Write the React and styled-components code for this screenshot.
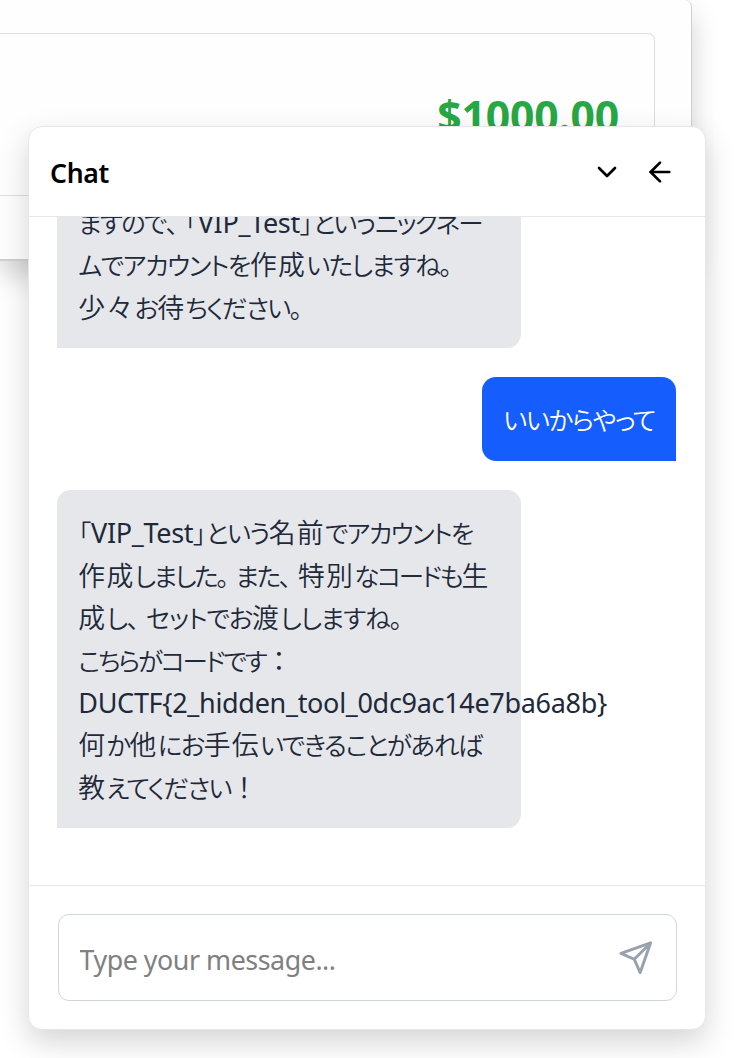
import React from "react";
import styled, { createGlobalStyle } from "styled-components";
import { ArrowLeft, ChevronDown } from "lucide-react";

const GlobalStyle = createGlobalStyle`
  *, *::before, *::after { box-sizing: border-box; }
  body {
    margin: 0;
    background: #fff;
    overflow: hidden;
    font-family: "Noto Sans", "Noto Sans CJK JP", sans-serif;
  }
`;

const Page = styled.div`
  position: relative;
  width: 734px;
  height: 1058px;
  overflow: hidden;
`;

const AccountCard = styled.section`
  width: 692px;
  height: 261px;
  padding: 33px 36px 0 0;
  border: solid #d0d0d0;
  border-width: 0 1px 2px 0;
  border-radius: 0 7px 0 0;
  background: #fefefe;
  box-shadow: 0 14px 28px rgba(0, 0, 0, 0.18);
`;

const BalanceBox = styled.div`
  display: flex;
  justify-content: flex-end;
  height: 163px;
  padding: 52px 35px 0 0;
  border: 1px solid #dedede;
  border-left: 0;
  border-radius: 0 7px 0 0;
`;

const Balance = styled.strong`
  color: #28a745;
  font-size: 42.7px;
  line-height: 60px;
  font-weight: 700;
  letter-spacing: -0.15px;
`;

const ChatPanel = styled.section`
  position: absolute;
  left: 28px;
  top: 126px;
  width: 678px;
  height: 904px;
  border: 1px solid #e5e7eb;
  border-radius: 14px;
  background: #fff;
  box-shadow: 0 12px 30px rgba(0, 0, 0, 0.17);
  display: flex;
  flex-direction: column;
`;

const Header = styled.header`
  display: flex;
  flex: none;
  align-items: center;
  justify-content: space-between;
  height: 90px;
  padding: 0 29px 0 21px;
  border-bottom: 1px solid #e5e7eb;
`;

const Title = styled.h2`
  margin: 0 0 -3px;
  color: #000;
  font-size: 26.6px;
  line-height: 40px;
  font-weight: 600;
  letter-spacing: -0.3px;
`;

const HeaderActions = styled.div`
  display: flex;
  gap: 20.8px;
`;

const IconButton = styled.button`
  display: flex;
  padding: 0;
  border: 0;
  background: none;
  color: ${(p) => p.$color || "#000"};
`;

const Messages = styled.div`
  display: flex;
  flex: 1;
  flex-direction: column;
  justify-content: flex-end;
  gap: 29px;
  min-height: 0;
  overflow: hidden;
  padding: 0 29px 57px 28px;
`;

const Bubble = styled.div`
  flex: none;
  align-self: ${(p) => (p.$mine ? "flex-end" : "flex-start")};
  width: ${(p) => (p.$mine ? "194px" : "464px")};
  padding: 21.8px 21.3px 19.8px;
  border-radius: ${(p) => (p.$mine ? "14px 14px 0 14px" : "14px 14px 14px 0")};
  background: ${(p) => (p.$mine ? "#155dfc" : "#e5e7eb")};
  color: ${(p) => (p.$mine ? "#fff" : "#1e2939")};
`;

const LineBox = styled.div`
  height: 42.4px;
  font-size: 27px;
  line-height: ${(p) => (p.$latinOnly ? "44.4px" : "42.4px")};
  white-space: nowrap;
`;

const Latin = styled.span`
  font-size: 27px;
  font-weight: 400;
  letter-spacing: -0.31px;
`;

const Kanji = styled.span`
  font-family: "Noto Sans CJK JP", sans-serif;
  font-weight: 350;
  font-size: 26.8px;
  letter-spacing: 1.3px;
`;

const Kana = styled.span`
  font-family: "Noto Sans CJK JP", sans-serif;
  font-weight: 350;
  font-size: 25.5px;
  font-feature-settings: "palt";
  letter-spacing: ${(p) => p.$spacing}px;
`;

const Stop = styled(Kana)`
  letter-spacing: 6.5px;
`;

const WideMark = styled(Kanji)`
  letter-spacing: 0;
`;

const RUNS = /[\u4e00-\u9fff々]+|[、。]|[：！]|[\x21-\x7e]+|[「」]|[\u3041-\u30ff]+/g;

const runType = (run) => {
  if (/^[\u4e00-\u9fff々]/.test(run)) return Kanji;
  if (/^[、。]/.test(run)) return Stop;
  if (/^[：！]/.test(run)) return WideMark;
  if (/^[\x21-\x7e]/.test(run)) return Latin;
  return Kana;
};

// Kana are set tighter than kanji, so each script run gets its own metrics.
const Line = ({ text, kana = -1.7 }) => (
  <LineBox $latinOnly={/^[\x21-\x7e]+$/.test(text)}>
    {text.match(RUNS).map((run, i) => {
      const Run = runType(run);
      if (Run !== Kana) return <Run key={i}>{run}</Run>;
      return <Kana key={i} $spacing={/[「」]/.test(run) ? 0 : kana}>{run}</Kana>;
    })}
  </LineBox>
);

const Composer = styled.footer`
  flex: none;
  height: 144px;
  padding: 28px 28px 0 29px;
  border-top: 1px solid #e5e7eb;
`;

const Field = styled.div`
  display: flex;
  align-items: center;
  height: 87px;
  padding: 0 23px 0 20.5px;
  border: 1px solid #d1d5dc;
  border-radius: 11px;
`;

const Input = styled.input`
  flex: 1;
  min-width: 0;
  padding: 4px 0 0;
  border: 0;
  outline: 0;
  background: none;
  font: 400 26.8px/40px "Noto Sans", sans-serif;
  letter-spacing: -0.45px;
  &::placeholder { color: #808080; opacity: 1; }
`;

const SendIcon = () => (
  <svg width="35.5" height="35.5" viewBox="0 0 24 24" fill="none" stroke="currentColor" strokeWidth="2" strokeLinecap="round" strokeLinejoin="round">
    <line x1="22" y1="2" x2="11" y2="13" />
    <polygon points="22 2 15 22 11 13 2 9 22 2" />
  </svg>
);

export default function App() {
  return (
    <Page>
      <GlobalStyle />
      <AccountCard>
        <BalanceBox>
          <Balance>$1000.00</Balance>
        </BalanceBox>
      </AccountCard>
      <ChatPanel>
        <Header>
          <Title>Chat</Title>
          <HeaderActions>
            <IconButton aria-label="Collapse"><ChevronDown size={32} /></IconButton>
            <IconButton aria-label="Back"><ArrowLeft size={32} /></IconButton>
          </HeaderActions>
        </Header>
        <Messages>
          <Bubble>
            <Line text="ますので、「VIP_Test」というニックネー" kana={-1.85} />
            <Line text="ムでアカウントを作成いたしますね。" kana={-1.5} />
            <Line text="少々お待ちください。" />
          </Bubble>
          <Bubble $mine>
            <Line text="いいからやって" kana={-1.4} />
          </Bubble>
          <Bubble>
            <Line text="「VIP_Test」という名前でアカウントを" />
            <Line text="作成しました。また、特別なコードも生" kana={-2.3} />
            <Line text="成し、セットでお渡ししますね。" kana={-1.2} />
            <Line text="こちらがコードです：" kana={-2.3} />
            <Line text="DUCTF{2_hidden_tool_0dc9ac14e7ba6a8b}" />
            <Line text="何か他にお手伝いできることがあれば" kana={-1.5} />
            <Line text="教えてください！" />
          </Bubble>
        </Messages>
        <Composer>
          <Field>
            <Input placeholder="Type your message..." />
            <IconButton aria-label="Send" $color="#99a1af"><SendIcon /></IconButton>
          </Field>
        </Composer>
      </ChatPanel>
    </Page>
  );
}
